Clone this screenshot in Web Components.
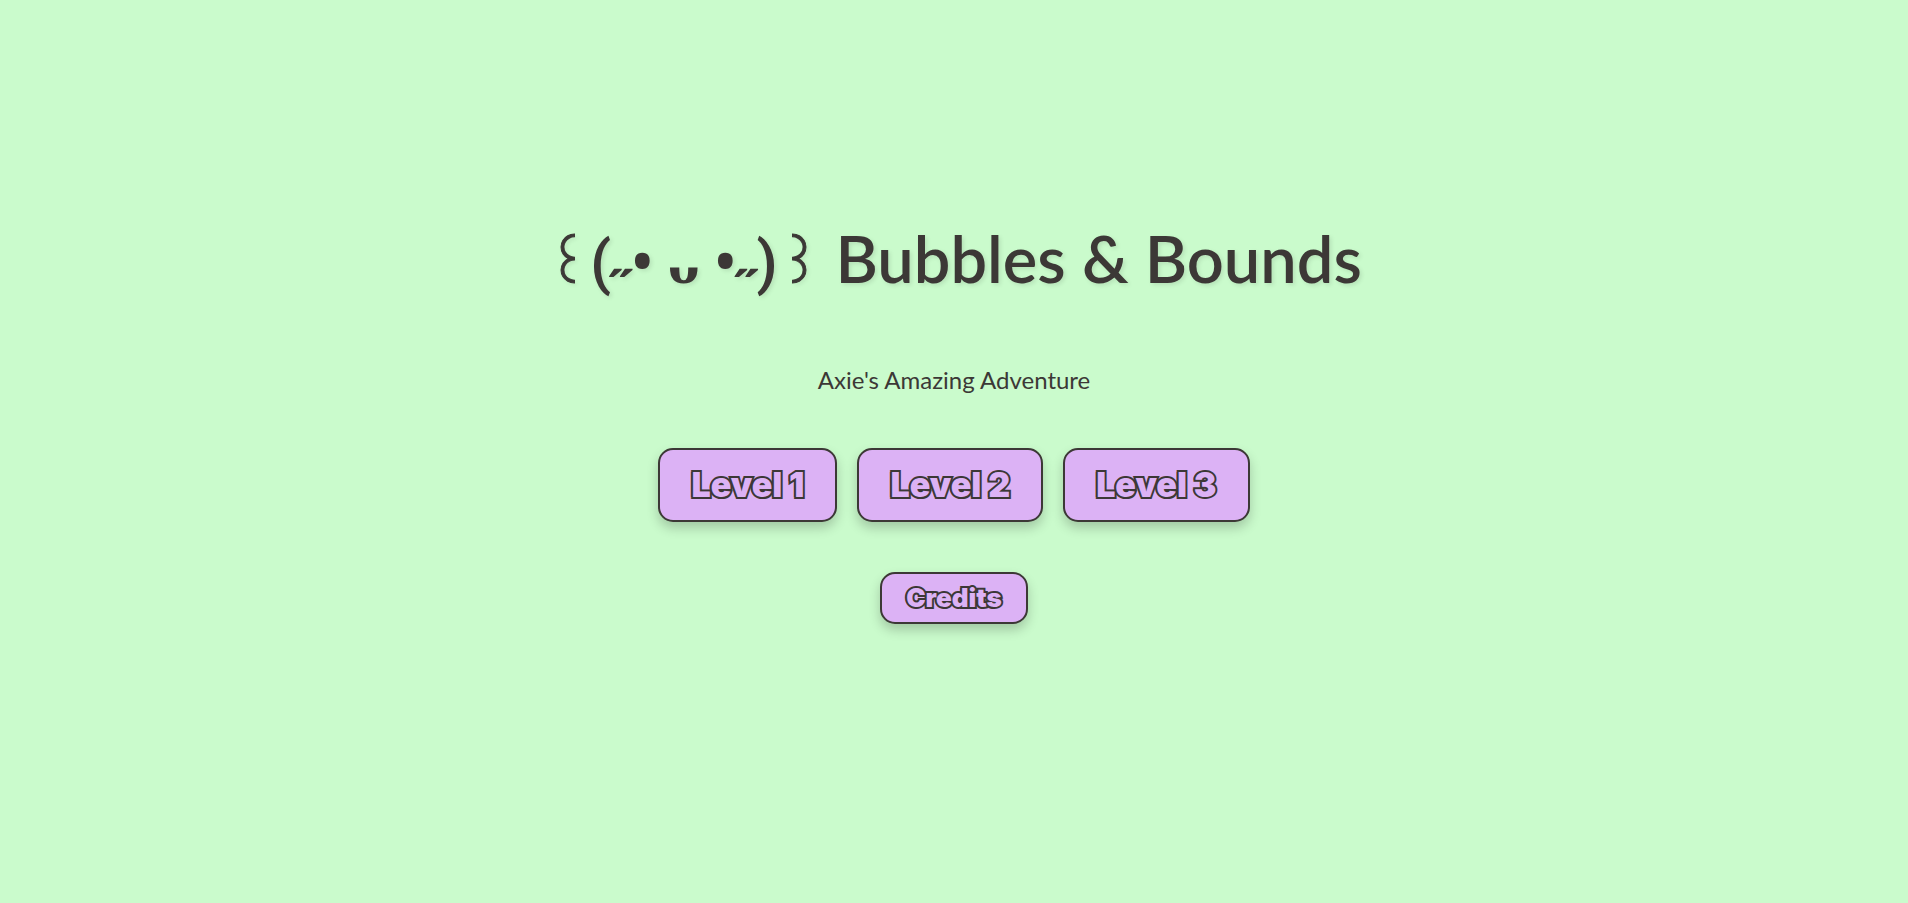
<!DOCTYPE html>
<html lang="en">
<head>
<meta charset="utf-8">
<meta name="viewport" content="width=device-width, initial-scale=1">
<title>Bubbles &amp; Bounds</title>
<style>
  :root { --mint: #cafbcc; --lilac: #dcb2f5; --ink: #3c3836; }
  body { margin: 0; background: var(--mint); color: var(--ink); font-family: Lato, sans-serif; }
</style>
</head>
<body>
<start-screen>
  <game-title slot="title">Bubbles &amp; Bounds</game-title>
  <span slot="tagline">Axie's Amazing Adventure</span>
  <game-button slot="level">Level 1</game-button>
  <game-button slot="level">Level 2</game-button>
  <game-button slot="level">Level 3</game-button>
  <game-button slot="footer" size="small">Credits</game-button>
</start-screen>

<template id="start-screen">
  <style>
    :host { display: block; }
    main { box-sizing: border-box; min-height: 100vh; padding: 0 16px 60px; display: flex; flex-direction: column; align-items: center; justify-content: center; text-align: center; }
    p { margin: 64px 0 54px; font-size: 24px; line-height: 28px; }
    nav { display: flex; flex-wrap: wrap; justify-content: center; gap: 20px; margin-bottom: 50px; }
  </style>
  <main>
    <slot name="title"></slot>
    <p><slot name="tagline"></slot></p>
    <nav aria-label="Levels"><slot name="level"></slot></nav>
    <slot name="footer"></slot>
  </main>
</template>

<template id="game-title">
  <style>
    :host { display: block; }
    h1 { margin: 0; font-size: 65px; line-height: 78px; font-weight: 600; text-shadow: 2px 2px 4px rgb(0 0 0 / 0.1); }
    .face { font-size: 56px; }
    .bracket { font-weight: 400; -webkit-text-stroke: 1px var(--ink); }
    .cheek { font-family: Roboto, sans-serif; font-size: 60px; }
    .eye { font-family: "Open Sans", sans-serif; font-size: 60px; }
    .mouth { font-family: "Liberation Serif", serif; font-size: 65px; font-weight: 700; }
  </style>
  <h1><span class="face"><span class="bracket">꒰</span><span class="cheek">(˶</span><span class="eye">•</span> <span class="mouth">ᴗ</span> <span class="eye">•</span><span class="cheek">˶)</span><span class="bracket">꒱</span> </span><slot></slot></h1>
</template>

<template id="game-button">
  <style>
    :host { display: block; }
    button { display: block; box-sizing: border-box; padding: 16px 31px; border: 2px solid var(--ink); border-radius: 15px; background: var(--lilac); color: var(--lilac); font: 900 34px/38px Inter, sans-serif; cursor: pointer; box-shadow: 0 6px 12px rgb(0 0 0 / 0.2); -webkit-text-stroke: 4px var(--ink); paint-order: stroke fill; text-shadow: -2px 0 0 var(--ink); }
    :host([size="small"]) button { padding: 10px 24px; font-size: 26px; line-height: 28px; }
  </style>
  <button type="button"><slot></slot></button>
</template>

<script>
  for (const name of ['start-screen', 'game-title', 'game-button']) {
    customElements.define(name, class extends HTMLElement {
      constructor() {
        super();
        this.attachShadow({ mode: 'open' }).append(document.getElementById(name).content.cloneNode(true));
      }
    });
  }
</script>
</body>
</html>
